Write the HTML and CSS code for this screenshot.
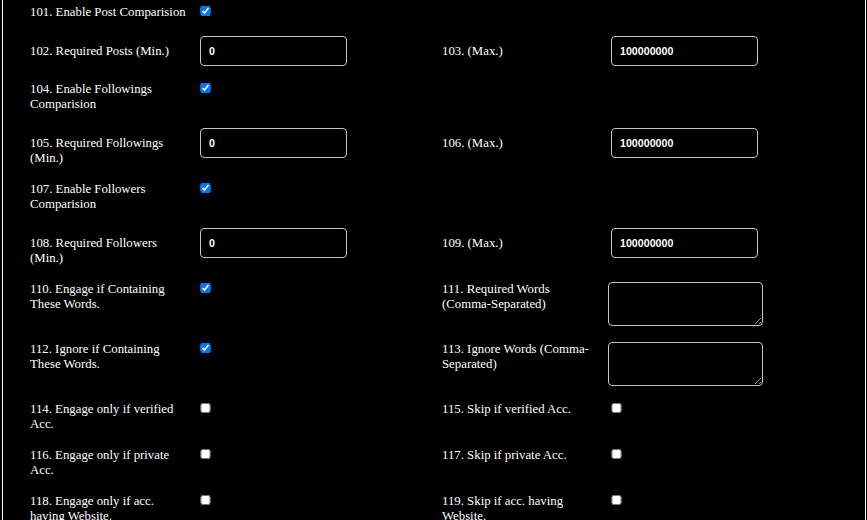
FILE: index.html
```html
<!DOCTYPE html>
<html lang="en">
<head>
<meta charset="utf-8">
<title>Comparison Settings</title>
<link rel="stylesheet" href="styles.css">
</head>
<body>
<div class="panel">
  <div class="form">
    <label class="lbl" for="f101">101. Enable Post Comparision</label>
    <div class="ctl"><input class="chk" type="checkbox" id="f101" checked></div>
    <div class="lbl"></div>
    <div class="ctl"></div>

    <label class="lbl" for="f102">102. Required Posts (Min.)</label>
    <div class="ctl"><input class="num" type="text" id="f102" value="0"></div>
    <label class="lbl" for="f103">103. (Max.)</label>
    <div class="ctl"><input class="num" type="text" id="f103" value="100000000"></div>

    <label class="lbl" for="f104">104. Enable Followings Comparision</label>
    <div class="ctl"><input class="chk" type="checkbox" id="f104" checked></div>
    <div class="lbl"></div>
    <div class="ctl"></div>

    <label class="lbl" for="f105">105. Required Followings (Min.)</label>
    <div class="ctl"><input class="num" type="text" id="f105" value="0"></div>
    <label class="lbl" for="f106">106. (Max.)</label>
    <div class="ctl"><input class="num" type="text" id="f106" value="100000000"></div>

    <label class="lbl" for="f107">107. Enable Followers Comparision</label>
    <div class="ctl"><input class="chk" type="checkbox" id="f107" checked></div>
    <div class="lbl"></div>
    <div class="ctl"></div>

    <label class="lbl" for="f108">108. Required Followers (Min.)</label>
    <div class="ctl"><input class="num" type="text" id="f108" value="0"></div>
    <label class="lbl" for="f109">109. (Max.)</label>
    <div class="ctl"><input class="num" type="text" id="f109" value="100000000"></div>

    <label class="lbl top" for="f110">110. Engage if Containing These Words.</label>
    <div class="ctl top"><input class="chk" type="checkbox" id="f110" checked></div>
    <label class="lbl top" for="f111">111. Required Words (Comma-Separated)</label>
    <div class="ctl top"><textarea class="words" id="f111"></textarea></div>

    <label class="lbl top" for="f112">112. Ignore if Containing These Words.</label>
    <div class="ctl top"><input class="chk" type="checkbox" id="f112" checked></div>
    <label class="lbl top" for="f113">113. Ignore Words (Comma-Separated)</label>
    <div class="ctl top"><textarea class="words" id="f113"></textarea></div>

    <label class="lbl" for="f114">114. Engage only if verified Acc.</label>
    <div class="ctl"><input class="chk" type="checkbox" id="f114"></div>
    <label class="lbl" for="f115">115. Skip if verified Acc.</label>
    <div class="ctl"><input class="chk" type="checkbox" id="f115"></div>

    <label class="lbl" for="f116">116. Engage only if private Acc.</label>
    <div class="ctl"><input class="chk" type="checkbox" id="f116"></div>
    <label class="lbl" for="f117">117. Skip if private Acc.</label>
    <div class="ctl"><input class="chk" type="checkbox" id="f117"></div>

    <label class="lbl" for="f118">118. Engage only if acc. having Website.</label>
    <div class="ctl"><input class="chk" type="checkbox" id="f118"></div>
    <label class="lbl" for="f119">119. Skip if acc. having Website.</label>
    <div class="ctl"><input class="chk" type="checkbox" id="f119"></div>
  </div>
</div>
</body>
</html>
```

FILE: styles.css
```css
html, body {
  margin: 0;
  padding: 0;
  background: #000;
}

body {
  font-family: "Liberation Serif", "Times New Roman", serif;
  font-size: 12.8px;
  color: #fff;
}

.panel {
  margin: 0 1px 0 2px;
  border-left: 1px solid #fff;
  border-right: 1px solid #fff;
  padding: 5px 0 20px 27px;
  min-height: 520px;
  box-sizing: border-box;
}

.form {
  display: grid;
  grid-template-columns: 167px 245px 166px 1fr;
  row-gap: 16px;
  align-items: baseline;
}

.lbl {
  display: block;
  max-width: 159px;
  line-height: 15px;
}

.ctl {
  display: block;
  line-height: 15px;
}

.top {
  align-self: start;
}

.chk {
  width: 10.4px;
  height: 10.4px;
  margin: 0 2.4px 0 3.2px;
  vertical-align: baseline;
}

.num {
  box-sizing: border-box;
  width: 147px;
  height: 30px;
  margin: 0 0 0 3px;
  padding: 0 8px;
  border: 1px solid #c4c4c4;
  border-radius: 4px;
  background: #000;
  color: #fff;
  font-family: "Liberation Sans", Arial, sans-serif;
  font-size: 10.67px;
  font-weight: 700;
}

.words {
  display: block;
  box-sizing: border-box;
  width: 155px;
  height: 44px;
  margin: 0;
  padding: 2px;
  border: 1px solid #c4c4c4;
  border-radius: 4px;
  background: #000;
  color: #fff;
  font-family: "Liberation Sans", Arial, sans-serif;
  font-size: 10.67px;
}
```
